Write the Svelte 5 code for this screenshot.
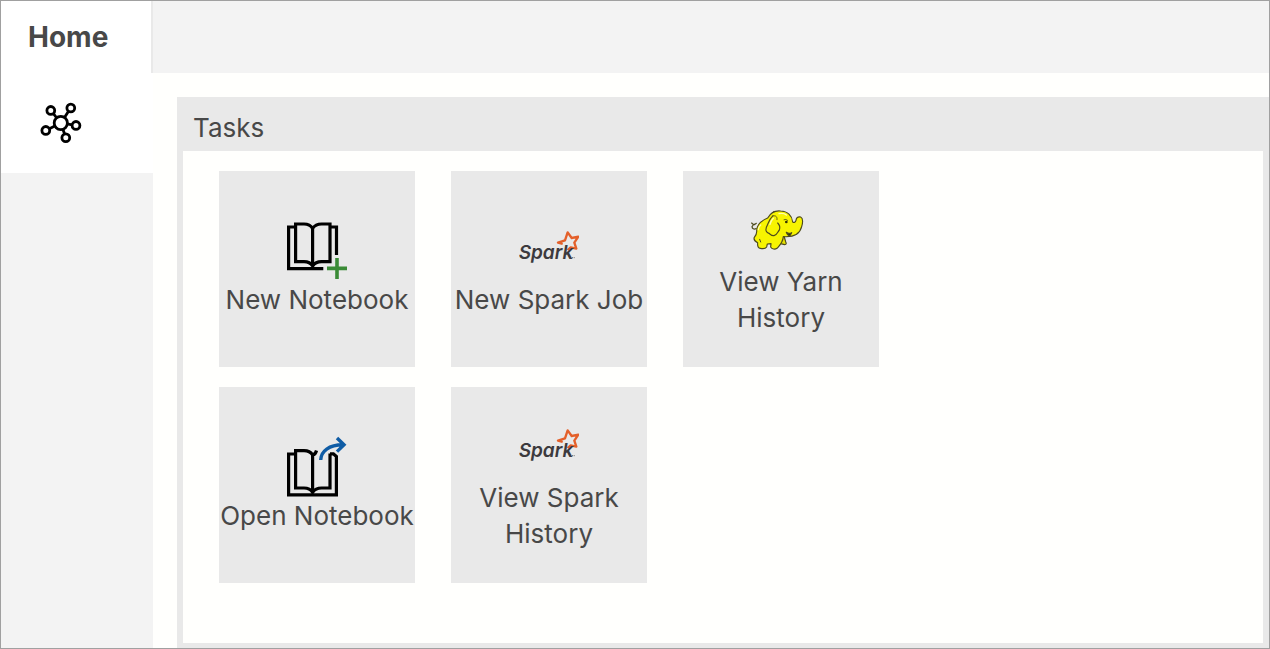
<script>
  const tasks = [
    { label: 'New Notebook', icon: 'new' },
    { label: 'New Spark Job', icon: 'spark' },
    { label: 'View Yarn History', icon: 'hadoop' },
    { label: 'Open Notebook', icon: 'open' },
    { label: 'View Spark History', icon: 'spark' }
  ];
</script>

<div class="app">
  <header>
    <a class="tab" href="#home">Home</a>
  </header>
  <div class="body">
    <nav>
      <button class="nav-item" aria-label="Cluster">
        <svg width="42" height="42" viewBox="0 0 42 42" fill="none" stroke="#000" stroke-width="2.8">
          <circle cx="20.8" cy="21" r="6.6" />
          <circle cx="10.8" cy="8.4" r="3.9" />
          <circle cx="30.8" cy="6" r="3.9" />
          <circle cx="36" cy="23.4" r="3.9" />
          <circle cx="25.8" cy="35.8" r="3.9" />
          <circle cx="5.8" cy="28.4" r="3.9" />
          <path d="M13.2 11.4l3.6 4.6M28.5 9.3l-4 6.2M32.2 22.8l-5-.9M24.6 32l-1.8-5M9.4 26.7l5.4-2.6" />
        </svg>
      </button>
    </nav>
    <main>
      <section class="panel">
        <h1>Tasks</h1>
        <div class="tiles">
          {#each tasks as task}
            <button class="tile">
              <svg class="icon" viewBox="0 0 60 62" fill="none" aria-hidden="true">
                {#if task.icon === 'new'}
                  <path d="M8 7H1.6v41.6H36.3M43.5 7h6V35" stroke="#000" stroke-width="3.2" />
                  <path d="M8.6 4H17q6 0 8.6 4.5Q28.5 4 34.5 4H43v37.7h-8.5q-6 0-8.9 4.300-2.600-4.300-8.600-4.300H8.600zM25.600 7v39" stroke="#000" stroke-width="3.200" />
                  <path d="M40 48.400h20M50 38v21" stroke="#3a8b36" stroke-width="3.600" />
                {:else if task.icon === 'open'}
                  <path d="M8 18H1.600v40.900h47.800V20.500l-3-2.700h-3.400" stroke="#000" stroke-width="3.200" />
                  <path d="M29.500 14.500q-1 4-3.900 4.500Q23 14.700 17 14.700H8.600V52H17q6 0 8.600 4.300Q28.500 52 34.500 52H43V17.500M25.600 18v38" stroke="#000" stroke-width="3.200" />
                  <path d="M33.700 24C34 15 42 8.800 56 8.800M50 2l7 6.800-7 6.800" stroke="#0f5ca5" stroke-width="3.400" />
                {:else if task.icon === 'spark'}
                  <g transform="translate(-9 5) scale(.3333)">
                    <path d="M158 57l-14-4 21-7 8-24 12 17 20-4-12 18 6 18-17-4-9 8" stroke="#e4602a" stroke-width="7" stroke-linejoin="round" />
                    <text class="wordmark" x="26" y="101">Spark</text>
                    <path d="M186 98h3M191 98h3" stroke="#666" stroke-width="3" />
                  </g>
                {:else}
                  <g transform="translate(-11 -2) scale(.3333)" stroke="#4d4a1c" stroke-width="3.5" stroke-linejoin="round" stroke-linecap="round">
                    <path d="M49 86Q37 90 36 80L42 72M38 72l-3-3M43 74l6-4" />
                    <path d="M112 110L132 108L137 125C140 131 139 134 134 134L118 130Z" fill="#e4e000" />
                    <path d="M83 54C64 62 50 73 50 92C51 101 48 106 43 112C40 119 45 124 53 128C52 138 54 144 61 145C70 147 78 144 80 141L82 132L93 131L92 141C96 148 105 149 111 145C118 137 128 130 130 110C160 112 180 101 185 80C189 66 188 54 182 51C173 49 169 54 168 61C166 67 163 69 158 66C156 47 143 34 122 33C104 31 91 40 83 54Z" fill="#f7f400" />
                    <path d="M99 47C88 57 86 67 79 82C76 92 79 98 87 100C92 104 95 108 102 107C112 105 112 97 118 90C121 82 118 74 113 69" fill="#f7f400" />
                    <path d="M62 126l-3-8M98 37q3-5 7-3" stroke-width="3" />
                    <path d="M99 48c10-3 13 4 12 11M132 59q6-3 11 2" stroke-width="2.500" />
                    <circle cx="139" cy="66" r="4" fill="#303000" stroke="none" />
                    <path d="M139 97q8 6 16 1l-5 9q-6 2-11-10" fill="#303000" />
                    <path d="M117 41q14-3 22 4M62 75q-6 5-7 14M100 55q-8 8-10 18" stroke="#fffcae" stroke-width="4" />
                  </g>
                {/if}
              </svg>
              <span>{task.label}</span>
            </button>
          {/each}
        </div>
      </section>
    </main>
  </div>
</div>

<style>
  :global(body) {
    margin: 0;
  }
  .app {
    box-sizing: border-box;
    min-height: 100vh;
    display: flex;
    flex-direction: column;
    border: 1px solid #a0a0a0;
    background: #fffffd;
    color: #484848;
    font-family: Inter, "Liberation Sans", sans-serif;
    font-size: 26px;
    line-height: 36px;
  }
  header {
    display: flex;
    height: 72px;
    background: #f3f3f3;
  }
  .tab {
    box-sizing: border-box;
    width: 152px;
    padding: 18px 27px;
    border-right: 2px solid #e9e9e9;
    background: #fff;
    color: inherit;
    font-size: 28px;
    font-weight: 650;
    text-decoration: none;
  }
  .body {
    flex: 1;
    display: flex;
  }
  nav {
    width: 152px;
    flex-shrink: 0;
    background: #f3f3f3;
  }
  button {
    margin: 0;
    border: 0;
    color: inherit;
    font: inherit;
    cursor: pointer;
  }
  .nav-item {
    display: flex;
    align-items: center;
    width: 100%;
    height: 100px;
    padding: 0 39px;
    background: #fff;
  }
  main {
    flex: 1;
    display: flex;
    min-width: 0;
    padding: 24px 0 0 24px;
  }
  .panel {
    flex: 1;
    display: flex;
    flex-direction: column;
    padding: 0 6px 5px;
    background: #e9e9e9;
  }
  h1 {
    margin: 0;
    padding: 13px 10px 5px;
    font-size: 26px;
    font-weight: 400;
  }
  .tiles {
    flex: 1;
    display: grid;
    grid-template-columns: repeat(3, 196px);
    align-content: start;
    gap: 20px 36px;
    padding: 20px 36px;
    background: #fffffd;
  }
  .tile {
    display: flex;
    flex-direction: column;
    align-items: center;
    justify-content: center;
    height: 196px;
    padding: 0;
    background: #e9e9e9;
  }
  .icon {
    width: 60px;
    height: 62px;
  }
  .wordmark {
    fill: #3c3a3e;
    font-family: Inter, sans-serif;
    font-size: 57px;
    font-style: italic;
    font-weight: 600;
  }
</style>
